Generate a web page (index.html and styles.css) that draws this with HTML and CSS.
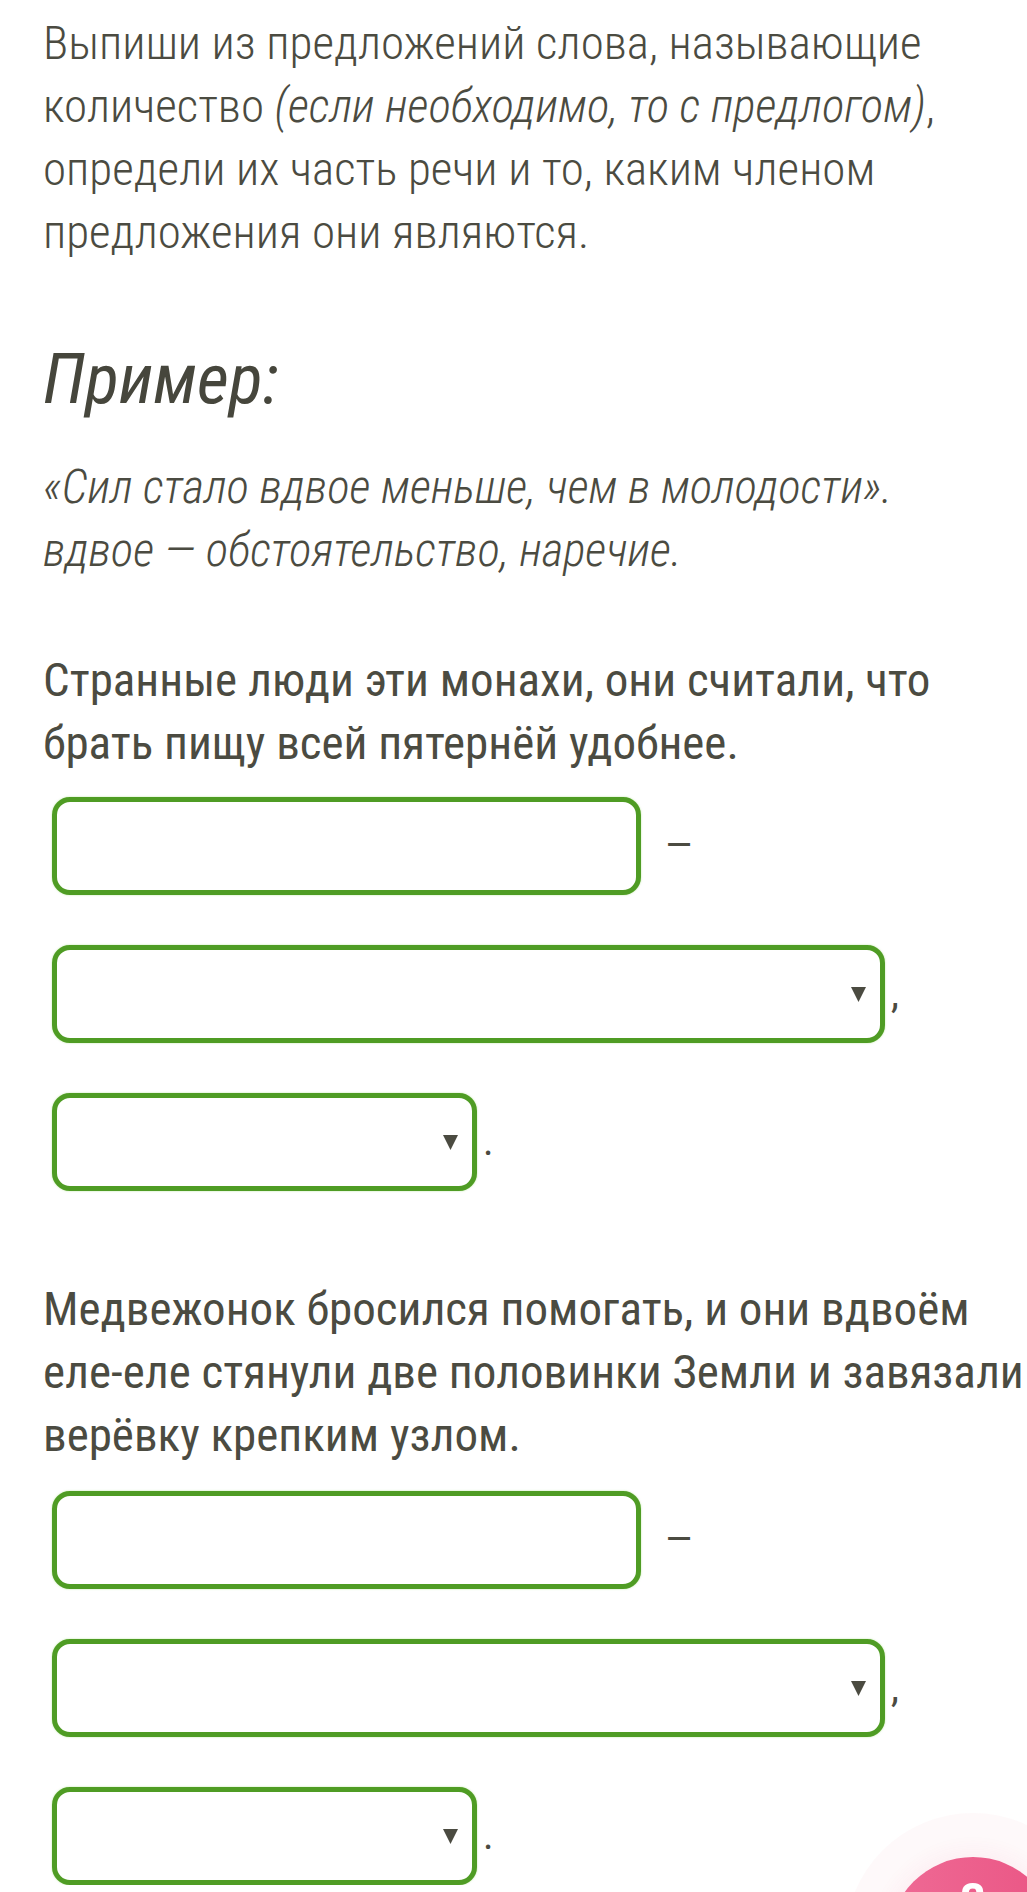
FILE: index.html
```html
<!DOCTYPE html>
<html lang="ru">
<head>
<meta charset="utf-8">
<title>Задание</title>
<link rel="stylesheet" href="styles.css">
</head>
<body>
<main class="page">
  <p class="task">Выпиши из предложений слова, называющие количество <em>(если необходимо, то с предлогом)</em>, определи их часть речи и то, каким членом предложения они являются.</p>

  <h2 class="example-title">Пример:</h2>
  <p class="example">«Сил стало вдвое меньше, чем в молодости».<br>вдвое — обстоятельство, наречие.</p>

  <section class="exercise first">
    <p class="sentence">Странные люди эти монахи, они считали, что брать пищу всей пятернёй удобнее.</p>
    <div class="answers">
      <div class="row"><input class="field field-word" type="text" aria-label="слово"><span class="punct dash">—</span></div>
      <div class="row"><div class="field choice choice-wide"><svg class="arrow" width="15" height="15" viewBox="0 0 15 15"><path d="M0 0H15L7.5 15Z"/></svg></div><span class="punct">,</span></div>
      <div class="row"><div class="field choice choice-narrow"><svg class="arrow" width="15" height="15" viewBox="0 0 15 15"><path d="M0 0H15L7.5 15Z"/></svg></div><span class="punct">.</span></div>
    </div>
  </section>

  <section class="exercise second">
    <p class="sentence">Медвежонок бросился помогать, и они вдвоём еле-еле стянули две половинки Земли и завязали верёвку крепким узлом.</p>
    <div class="answers">
      <div class="row"><input class="field field-word" type="text" aria-label="слово"><span class="punct dash">—</span></div>
      <div class="row"><div class="field choice choice-wide"><svg class="arrow" width="15" height="15" viewBox="0 0 15 15"><path d="M0 0H15L7.5 15Z"/></svg></div><span class="punct">,</span></div>
      <div class="row"><div class="field choice choice-narrow"><svg class="arrow" width="15" height="15" viewBox="0 0 15 15"><path d="M0 0H15L7.5 15Z"/></svg></div><span class="punct">.</span></div>
    </div>
  </section>
</main>
<button class="help" type="button">?</button>
</body>
</html>
```
FILE: styles.css
```css
html, body {
  margin: 0;
  padding: 0;
  background: #ffffff;
  overflow-x: hidden;
}

body {
  font-family: "Roboto Condensed", Roboto, "Noto Sans", sans-serif;
  font-stretch: 88.5%;
  color: #4b4b41;
}

.page {
  width: 990px;
  padding: 11px 0 0 43px;
}

.task {
  margin: 0;
  font-size: 47px;
  font-weight: 300;
  line-height: 63px;
}

.task em {
  font-style: italic;
}

.example-title {
  margin: 76px 0 0;
  font-size: 70px;
  font-weight: 400;
  font-style: italic;
  line-height: 80px;
  color: #46463c;
}

.example {
  margin: 36px 0 0;
  font-size: 47px;
  font-weight: 300;
  font-style: italic;
  line-height: 63px;
}

.exercise.first {
  margin-top: 67px;
}

.exercise.second {
  margin-top: 86px;
}

.sentence {
  margin: 0;
  font-size: 47px;
  font-weight: 400;
  line-height: 63px;
}

.answers {
  display: flex;
  flex-direction: column;
  gap: 50px;
  margin: 23px 0 0 9px;
}

.exercise.second .answers {
  margin-top: 25px;
}

.row {
  display: flex;
  align-items: center;
}

.field {
  box-sizing: border-box;
  height: 98px;
  margin: 0;
  padding: 0;
  border: 5px solid #4f9c24;
  border-radius: 18px;
  background: #ffffff;
  box-shadow: 0 0 2px rgba(130, 210, 80, 0.55);
  font: 400 40px Roboto, sans-serif;
  outline: none;
}

.field-word {
  width: 589px;
}

.choice {
  display: flex;
  align-items: center;
  justify-content: flex-end;
  padding-right: 14px;
}

.choice-wide {
  width: 833px;
}

.choice-narrow {
  width: 425px;
}

.arrow {
  display: block;
  fill: #4b4b41;
}

.punct {
  font-size: 40px;
  line-height: 40px;
  margin-left: 6px;
}

.punct.dash {
  margin-left: 24px;
}

.help {
  position: fixed;
  right: -30px;
  bottom: -133px;
  width: 168px;
  height: 168px;
  margin: 0;
  padding: 20px 0 0;
  border: none;
  border-radius: 50%;
  background: linear-gradient(90deg, #ef6a95, #ea5584);
  box-shadow: 0 0 0 44px rgba(236, 93, 139, 0.04), 0 0 30px rgba(236, 93, 139, 0.1);
  color: #ffffff;
  font: 700 48px/48px Roboto, sans-serif;
  text-align: center;
  display: flex;
  justify-content: center;
  align-items: flex-start;
}
```
